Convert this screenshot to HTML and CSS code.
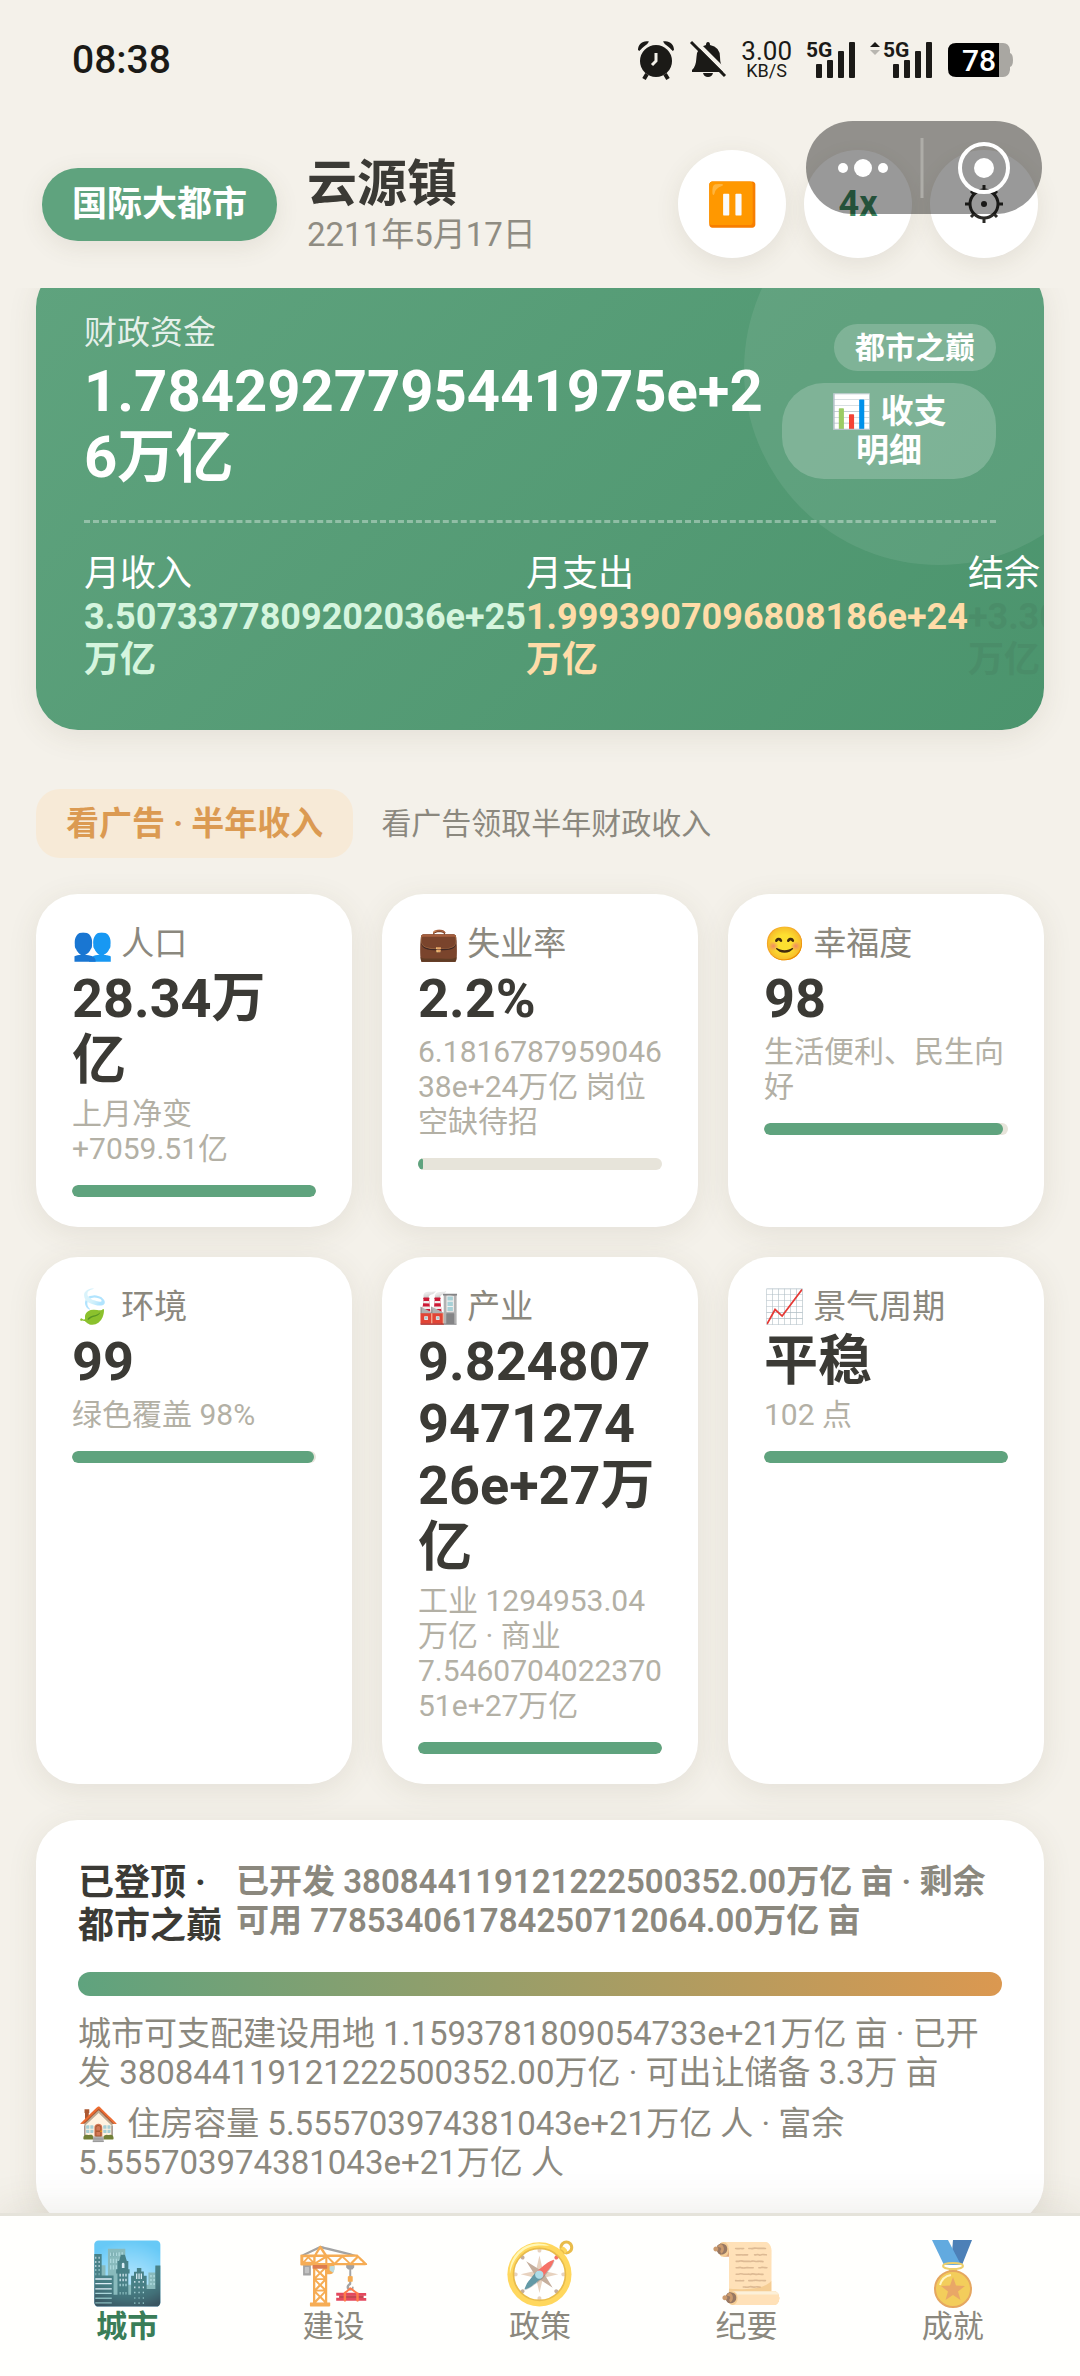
FILE: index.html
```html
<!DOCTYPE html>
<html lang="zh-CN">
<head>
<meta charset="utf-8">
<meta name="viewport" content="width=device-width, initial-scale=1">
<title>云源镇</title>
<link rel="stylesheet" href="styles.css">
</head>
<body>
<div class="status">
  <time class="clock">08:38</time>
  <div class="status-icons">
    <svg width="38" height="40" viewBox="0 0 38 40" aria-label="闹钟"><g fill="#1b1a17"><circle cx="19" cy="21" r="16"/><path d="M1 10C1 4 6 0 12 1.500Q11 4 7 6.500Q3 10 2.500 11ZM37 10C37 4 32 0 26 1.500Q27 4 31 6.500Q35 10 35.500 11Z"/></g><path d="M10 34L7 39M28 34L31 39" stroke="#1b1a17" stroke-width="4"/><path d="M19 13V21L15 25" fill="none" stroke="#f4f1ea" stroke-width="3"/></svg>
    <svg width="36" height="38" viewBox="0 0 36 38" aria-label="静音"><path d="M18 1Q20 1 20 4Q30 6 30 16Q30 24 34 29V31H2V29Q6 26 6.500 16Q7 6 16 4Q16 1 18 1ZM13 32H23Q22 36 18 36Q14 36 13 32Z" fill="#1b1a17"/><path d="M3 -2L38 33" stroke="#f4f1ea" stroke-width="4"/><path d="M1 1L35 35" stroke="#1b1a17" stroke-width="3"/></svg>
    <div class="speed"><span class="speed-value">3.00</span><span class="speed-unit">KB/S</span></div>
    <svg width="48" height="38" viewBox="0 0 48 38"><text x="-1" y="16" class="net">5G</text><g fill="#1b1a17"><rect x="9" y="23" width="6" height="14" rx="1"/><rect x="20" y="19" width="6" height="18" rx="1"/><rect x="31" y="10" width="6" height="27" rx="1"/><rect x="42" y="1" width="6" height="36" rx="1"/></g></svg>
    <svg width="62" height="38" viewBox="0 0 62 38"><path d="M0 6L5 1L10 6Z" fill="#1b1a17"/><path d="M0 9L5 14L10 9Z" fill="#b8b6b0"/><text x="13" y="16" class="net">5G</text><g fill="#1b1a17"><rect x="23" y="23" width="6" height="14" rx="1"/><rect x="34" y="19" width="6" height="18" rx="1"/><rect x="45" y="10" width="6" height="27" rx="1"/><rect x="56" y="1" width="6" height="36" rx="1"/></g></svg>
    <svg width="66" height="36" viewBox="0 0 66 36"><path d="M50 1H56Q62 1 63 8V11Q66 12 66 18Q66 24 63 25V28Q62 35 56 35H50Z" fill="#a9a7a2"/><path d="M9 1H52V35H9Q1 35 1 27V9Q1 1 9 1Z"/><text x="15" y="29" class="charge">78</text></svg>
  </div>
</div>
<header class="topbar">
  <span class="rank">国际大都市</span>
  <div class="town">
    <h1>云源镇</h1>
    <time>2211年5月17日</time>
  </div>
  <div class="controls">
    <button type="button" aria-label="暂停">⏸️</button>
    <button type="button" class="rate">4x</button>
    <button type="button" aria-label="设置">
      <svg class="gear" width="38" height="38" viewBox="0 0 38 38" fill="none" stroke="#2b2a27"><circle cx="19" cy="19" r="14" stroke-width="3"/><circle cx="19" cy="19" r="3" fill="#2b2a27" stroke="none"/><path d="M19 0V5M19 33V38M0 19H5M33 19H38M6 6L9 9M29 29L32 32M6 32L9 29M29 9L32 6" stroke-width="3"/></svg>
    </button>
  </div>
  <div class="capsule">
    <svg viewBox="0 0 236 93" width="236" height="93"><g fill="#fff"><circle cx="37" cy="47" r="5"/><circle cx="57" cy="47" r="9"/><circle cx="77" cy="47" r="5"/><circle cx="178" cy="47" r="10"/></g><path d="M116 17V77" stroke="#aeada8" stroke-width="3"/><circle cx="178" cy="47" r="24" fill="none" stroke="#fff" stroke-width="4"/></svg>
  </div>
</header>
<main>
  <div class="feed">
    <section class="hero">
      <div class="hero-top">
        <div class="funds">
          <div class="funds-label">财政资金</div>
          <div class="funds-value">1.7842927795441975e+26万亿</div>
        </div>
        <div class="hero-side">
          <span class="peak">都市之巅</span>
          <button type="button" class="detail">📊 收支明细</button>
        </div>
      </div>
      <dl class="flows">
        <div><dt>月收入</dt><dd class="in">3.5073377809202036e+25万亿</dd></div>
        <div><dt>月支出</dt><dd class="out">1.9993907096808186e+24万亿</dd></div>
        <div><dt>结余</dt><dd class="net-flow">+3.3073987099521217e+25万亿</dd></div>
      </dl>
    </section>
    <div class="promo">
      <button type="button">看广告 · 半年收入</button>
      <span>看广告领取半年财政收入</span>
    </div>
    <section class="stats">
      <article><h2>👥 人口</h2><p class="value">28.34万亿</p><p class="note">上月净变 +7059.51亿</p><div class="bar"><i style="width:100%"></i></div></article>
      <article><h2>💼 失业率</h2><p class="value">2.2%</p><p class="note">6.181678795904638e+24万亿 岗位空缺待招</p><div class="bar"><i style="width:2.2%"></i></div></article>
      <article><h2>😊 幸福度</h2><p class="value">98</p><p class="note">生活便利、民生向好</p><div class="bar"><i style="width:98%"></i></div></article>
      <article><h2>🍃 环境</h2><p class="value">99</p><p class="note">绿色覆盖 98%</p><div class="bar"><i style="width:99%"></i></div></article>
      <article><h2>🏭 产业</h2><p class="value">9.824807947127426e+27万亿</p><p class="note">工业 1294953.04万亿 · 商业 7.546070402237051e+27万亿</p><div class="bar"><i style="width:100%"></i></div></article>
      <article><h2>📈 景气周期</h2><p class="value">平稳</p><p class="note">102 点</p><div class="bar"><i style="width:100%"></i></div></article>
    </section>
    <section class="land">
      <div class="land-head">
        <h2>已登顶 · 都市之巅</h2>
        <p>已开发 380844119121222500352.00万亿 亩 · 剩余可用 778534061784250712064.00万亿 亩</p>
      </div>
      <div class="land-bar"></div>
      <p class="land-text">城市可支配建设用地 1.1593781809054733e+21万亿 亩 · 已开发 380844119121222500352.00万亿 · 可出让储备 3.3万 亩</p>
      <p class="land-text home">🏠 住房容量 5.555703974381043e+21万亿 人 · 富余 5.555703974381043e+21万亿 人</p>
    </section>
  </div>
</main>
<nav class="tabs">
  <a href="#city" class="active"><span class="tab-icon">🏙️</span>城市</a>
  <a href="#build"><span class="tab-icon">🏗️</span>建设</a>
  <a href="#policy"><span class="tab-icon">🧭</span>政策</a>
  <a href="#notes"><span class="tab-icon">📜</span>纪要</a>
  <a href="#awards"><span class="tab-icon"><svg width="42" height="67" viewBox="0 0 42 67"><path d="M21 0H40L30 25H19Z" fill="#1256a0"/><path d="M0 0H16L29 25H12Z" fill="#2e8ed6"/><ellipse cx="21" cy="26" rx="10" ry="3" fill="none" stroke="#e8c03a" stroke-width="2"/><path d="M17 28H25V34H17Z" fill="#e8c03a"/><circle cx="21" cy="49" r="18" fill="#f0bd25" stroke="#dd8a2c" stroke-width="2"/><path d="M8 45A14 14 0 0 1 19 35" fill="none" stroke="#fff3b0" stroke-width="2"/><path d="M21 37L24 45.500L33 46L26 51.500L28.500 60L21 55L13.500 60L16 51.500L9 46L18 45.500Z" fill="#e28a35"/></svg></span>成就</a>
</nav>
</body>
</html>
```
FILE: styles.css
```css
* { box-sizing: border-box; margin: 0; padding: 0; }

body {
  height: 100vh;
  display: flex;
  flex-direction: column;
  background: #f4f1ea;
  color: #3b3a35;
  font-family: Roboto, "Noto Sans CJK SC", sans-serif;
  font-size: 33px;
  line-height: 39px;
}

button { border: 0; font: inherit; color: inherit; }
svg { display: block; flex: none; overflow: visible; }

.status {
  flex: none;
  height: 120px;
  padding: 0 67px 0 72px;
  display: flex;
  align-items: center;
  justify-content: space-between;
  color: #1b1a17;
}
.clock { font-size: 39px; font-weight: 500; }
.status-icons { display: flex; align-items: center; gap: 15px; }
.speed { display: flex; flex-direction: column; align-items: center; }
.speed-value { font-size: 26px; line-height: 22px; }
.speed-unit { font-size: 18px; line-height: 18px; }
.net { font: 700 21px Roboto, sans-serif; fill: #1b1a17; }
.charge { font: 500 30px Roboto, sans-serif; fill: #fff; }

.topbar {
  position: relative;
  flex: none;
  padding: 30px 36px 30px 42px;
  display: flex;
  align-items: center;
  gap: 30px;
}
.rank {
  padding: 17px 30px;
  border-radius: 36px;
  background: #5fa37e;
  color: #fff;
  font-size: 35px;
  font-weight: 700;
  box-shadow: 0 6px 24px rgba(90, 80, 50, .1);
}
.town { flex: 1; }
.town h1 { font-size: 50px; line-height: 62px; font-weight: 700; }
.town time { display: block; color: #8f8c82; line-height: 40px; }
.controls { display: flex; gap: 18px; padding-right: 6px; }
.controls button {
  width: 108px;
  height: 108px;
  border-radius: 50%;
  background: #fff;
  font-size: 42px;
  box-shadow: 0 6px 24px rgba(90, 80, 50, .1);
}
.controls .rate { font-size: 36px; font-weight: 700; color: #3d8862; }
.gear { margin: 0 auto; }
.capsule {
  position: absolute;
  top: 1px;
  right: 38px;
  border-radius: 47px;
  background: rgba(0, 0, 0, .4);
}

main { flex: 1; min-height: 0; overflow: hidden; }
.feed { margin-top: -23px; padding: 0 36px 48px; }

.hero {
  position: relative;
  overflow: hidden;
  padding: 48px;
  border-radius: 42px;
  background: linear-gradient(135deg, #5fa37e, #4b946d);
  color: #fff;
  box-shadow: 0 6px 30px rgba(90, 80, 50, .1);
}
.hero::before {
  content: "";
  position: absolute;
  top: -90px;
  right: -90px;
  width: 390px;
  height: 390px;
  border-radius: 50%;
  background: rgba(255, 255, 255, .08);
}
.hero-top {
  position: relative;
  display: flex;
  align-items: center;
  padding-bottom: 30px;
  border-bottom: 3px dashed rgba(255, 255, 255, .35);
}
.funds { flex: 1; min-width: 0; }
.funds-label { margin-bottom: 6px; color: rgba(255, 255, 255, .85); }
.funds-value { font-size: 58px; line-height: 66px; font-weight: 700; overflow-wrap: anywhere; }
.hero-side { width: 214px; display: flex; flex-direction: column; align-items: flex-end; gap: 12px; }
.peak {
  padding: 4px 21px;
  border-radius: 24px;
  background: rgba(255, 255, 255, .2);
  font-size: 30px;
  font-weight: 700;
}
.detail {
  width: 100%;
  padding: 9px 42px;
  border-radius: 42px;
  background: rgba(255, 255, 255, .2);
  font-weight: 700;
}
.flows { position: relative; display: flex; padding-top: 30px; font-size: 36px; line-height: 43px; }
.flows div { flex: 1; }
.flows dt { white-space: nowrap; }
.flows dd { font-weight: 700; }
.in { color: #d5f5de; }
.out { color: #ffdca8; }
.net-flow { color: #4a8d69; }

.promo { display: flex; align-items: center; gap: 28px; margin: 59px 0 36px; }
.promo button {
  padding: 15px 30px;
  border-radius: 24px;
  background: #f7ead7;
  color: #db9a52;
  font-weight: 700;
}
.promo span { font-size: 30px; color: #8b887e; }

.stats { display: grid; grid-template-columns: repeat(3, 1fr); gap: 30px; }
.stats article, .land {
  border-radius: 42px;
  background: #fff;
  box-shadow: 0 6px 30px rgba(90, 80, 50, .1);
}
.stats article { min-width: 0; padding: 30px 36px; }
.stats h2 { font-size: 33px; font-weight: 400; color: #8b887e; white-space: nowrap; }
.value { margin: 5px 0 4px; font-size: 54px; line-height: 62px; font-weight: 700; overflow-wrap: anywhere; }
.note { font-size: 30px; line-height: 35px; color: #b3b0a5; overflow-wrap: anywhere; }
.bar { height: 12px; margin-top: 19px; border-radius: 6px; background: #e7e4da; overflow: hidden; }
.bar i { display: block; height: 100%; border-radius: 6px; background: #5fa37e; }

.land { margin-top: 36px; padding: 42px; color: #8b887e; }
.land-head { display: flex; gap: 14px; font-weight: 600; }
.land-head h2 { flex: 0 0 144px; font-size: 36px; line-height: 43px; font-weight: 700; color: #3b3a35; }
.land-bar { height: 24px; margin: 24px 0 18px; border-radius: 12px; background: linear-gradient(90deg, #5fa37e, #db9850); }
.home { margin-top: 12px; }

.tabs {
  position: relative;
  flex: none;
  padding: 24px 24px 30px;
  display: flex;
  border-top: 3px solid #e5e3da;
  background: #fffffd;
  box-shadow: 0 -6px 36px rgba(90, 80, 50, .1);
}
.tabs a {
  flex: 1;
  display: flex;
  flex-direction: column;
  align-items: center;
  color: #8b887e;
  font-size: 31px;
  text-decoration: none;
}
.tab-icon { font-size: 60px; line-height: 67px; opacity: .75; }
.tabs .active { color: #3a7d58; font-weight: 700; }
.active .tab-icon { opacity: 1; }
```
